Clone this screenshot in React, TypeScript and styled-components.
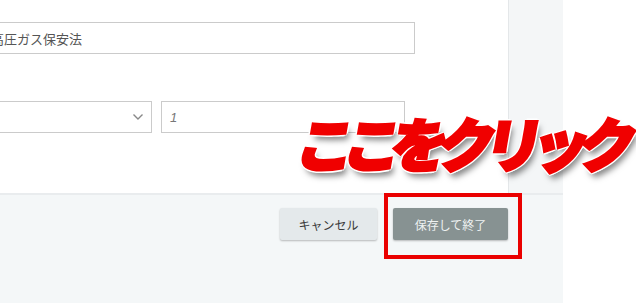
import React from 'react';
import styled, { createGlobalStyle } from 'styled-components';

const GlobalStyle = createGlobalStyle`
  html, body {
    margin: 0;
    padding: 0;
    background: #fff;
  }
  body {
    font-family: "Noto Sans CJK JP", "Noto Sans", sans-serif;
    overflow: hidden;
  }
`;

export const Page = styled.div`
  position: relative;
  width: 636px;
  height: 303px;
  display: flex;
  overflow: hidden;
`;

export const Sheet = styled.div`
  width: 563px;
  display: flex;
  flex-direction: column;
`;

export const TopArea = styled.div`
  display: flex;
  height: 193px;
`;

export const Content = styled.div`
  width: 508px;
  background: #fff;
  overflow: hidden;
`;

export const SideStrip = styled.div`
  flex: 1;
  background: #f4f6f7;
  border-left: 1px solid #e4e7e9;
`;

export const Form = styled.div`
  margin-left: -16px;
  padding-top: 22px;
  display: flex;
  flex-direction: column;
  gap: 47px;
`;

export const Row = styled.div`
  display: flex;
  gap: 9px;
`;

export const TextBox = styled.div<{ $width: number; $italic?: boolean }>`
  box-sizing: border-box;
  width: ${(p) => p.$width}px;
  height: 32px;
  border: 1px solid #cbcbcb;
  background: #fff;
  display: flex;
  align-items: center;
  padding-left: ${(p) => (p.$italic ? 8 : 6)}px;
  font-size: 13px;
  color: ${(p) => (p.$italic ? '#777' : '#555')};
  font-style: ${(p) => (p.$italic ? 'italic' : 'normal')};
  font-family: ${(p) =>
    p.$italic ? '"Liberation Sans", sans-serif' : '"Noto Sans CJK JP", sans-serif'};
`;

export const SelectBox = styled.div`
  box-sizing: border-box;
  width: 168px;
  height: 32px;
  border: 1px solid #cbcbcb;
  background: #fff;
  display: flex;
  align-items: center;
  justify-content: flex-end;
  padding-right: 7px;
`;

export const Footer = styled.div`
  flex: 1;
  background: #f4f7f8;
  border-top: 2px solid #e9ecee;
  display: flex;
  justify-content: flex-end;
  align-items: flex-start;
  gap: 16px;
  padding: 13px 55px 0 0;
`;

export const Button = styled.button<{ $primary?: boolean }>`
  height: 32px;
  width: ${(p) => (p.$primary ? 115 : 97)}px;
  border: none;
  border-radius: 2px;
  background: ${(p) => (p.$primary ? '#879292' : '#e4e9eb')};
  color: ${(p) => (p.$primary ? '#eef1f1' : '#3a3a3a')};
  font-family: "Noto Sans CJK JP", sans-serif;
  font-size: 12px;
  box-shadow: 0 1px 2px rgba(0, 0, 0, 0.25);
  padding: 0;
`;

export const Highlight = styled.div`
  position: absolute;
  left: 384px;
  top: 193px;
  width: 138px;
  height: 66px;
  box-sizing: border-box;
  border: 4px solid #ea0000;
`;

export const Callout = styled.div`
  position: absolute;
  left: 298px;
  top: 113px;
  font-family: "Noto Sans CJK JP", sans-serif;
  font-weight: 900;
  font-size: 58px;
  line-height: 1;
  letter-spacing: -11px;
  color: #f00000;
  white-space: nowrap;
  transform: skewX(-10deg);
  -webkit-text-stroke: 3px #f00000;
  text-shadow:
    3px 0 #fff, -3px 0 #fff, 0 3px #fff, 0 -3px #fff,
    2px 2px #fff, -2px -2px #fff, 2px -2px #fff, -2px 2px #fff,
    4px 6px 6px rgba(0, 0, 0, 0.5);
`;

const Chevron = () => (
  <svg width="12" height="8" viewBox="0 0 12 8">
    <path d="M1.5 1.5 L6 6 L10.5 1.5" fill="none" stroke="#888" strokeWidth="1.4" />
  </svg>
);

const App = () => {
  return (
    <>
      <GlobalStyle />
      <Page>
        <Sheet>
          <TopArea>
            <Content>
              <Form>
                <TextBox $width={431}>高圧ガス保安法</TextBox>
                <Row>
                  <SelectBox>
                    <Chevron />
                  </SelectBox>
                  <TextBox $width={244} $italic>1</TextBox>
                </Row>
              </Form>
            </Content>
            <SideStrip />
          </TopArea>
          <Footer>
            <Button>キャンセル</Button>
            <Button $primary>保存して終了</Button>
          </Footer>
        </Sheet>
        <Highlight />
        <Callout>ここをクリック</Callout>
      </Page>
    </>
  );
};

export default App;
